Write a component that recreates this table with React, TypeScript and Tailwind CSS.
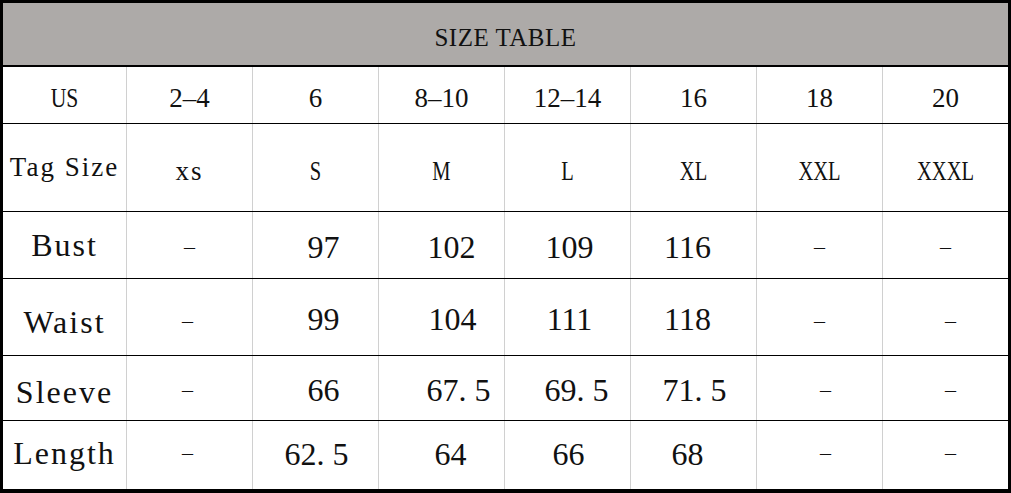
const serif = "font-['Liberation_Serif','Times_New_Roman',serif] text-[#111]";

type Cell = [string, string];

const colLine = "border-l border-[#d0d0d0]";
const dash = "–";
const dashCls = "text-[22px]";

const rows: { cls: string; cells: Cell[] }[] = [
  {
    cls: "h-[57px] border-b border-black text-[27px]",
    cells: [
      ["US", "scale-x-[0.8] pt-[7px]"],
      ["2–4", "pt-[7px]"],
      ["6", "pt-[7px]"],
      ["8–10", "pt-[7px]"],
      ["12–14", "pt-[7px]"],
      ["16", "pt-[7px]"],
      ["18", "pt-[7px]"],
      ["20", "pt-[7px]"],
    ],
  },
  {
    cls: "h-[88px] border-b border-black",
    cells: [
      ["Tag Size", "text-[27px] tracking-[2px]"],
      ["xs", "text-[27px] tracking-[2px] pt-[8px]"],
      ["S", "text-[27px] scale-x-[0.76] pt-[8px]"],
      ["M", "text-[27px] scale-x-[0.76] pt-[8px]"],
      ["L", "text-[27px] scale-x-[0.76] pt-[8px]"],
      ["XL", "text-[27px] scale-x-[0.76] pt-[8px]"],
      ["XXL", "text-[27px] scale-x-[0.76] pt-[8px]"],
      ["XXXL", "text-[27px] scale-x-[0.76] pt-[8px]"],
    ],
  },
  {
    cls: "h-[67px] border-b border-black text-[32px]",
    cells: [
      ["Bust", "tracking-[2px]"],
      [dash, `${dashCls} pt-[4px]`],
      ["97", "pl-[16px] pt-[3px]"],
      ["102", "pl-[20px] pt-[3px]"],
      ["109", "pl-[4px] pt-[3px]"],
      ["116", "pr-[12px] pt-[3px]"],
      [dash, `${dashCls} pt-[4px]`],
      [dash, `${dashCls} pt-[4px]`],
    ],
  },
  {
    cls: "h-[77px] border-b border-black text-[32px]",
    cells: [
      ["Waist", "tracking-[2px] pt-[9px]"],
      [dash, `${dashCls} pr-[4px] pt-[8px]`],
      ["99", "pl-[16px] pt-[3px]"],
      ["104", "pl-[22px] pt-[3px]"],
      ["111", "pl-[4px] pt-[3px]"],
      ["118", "pr-[12px] pt-[3px]"],
      [dash, `${dashCls} pt-[8px]`],
      [dash, `${dashCls} pl-[10px] pt-[8px]`],
    ],
  },
  {
    cls: "h-[65px] border-b border-black text-[32px]",
    cells: [
      ["Sleeve", "tracking-[2px] pt-[7px]"],
      [dash, `${dashCls} pr-[4px] pt-[3px]`],
      ["66", "pl-[16px] pt-[3px]"],
      ["67. 5", "pl-[34px] pt-[3px]"],
      ["69. 5", "pl-[18px] pt-[3px]"],
      ["71. 5", "pl-[2px] pt-[3px]"],
      [dash, `${dashCls} pl-[12px] pt-[3px]`],
      [dash, `${dashCls} pl-[10px] pt-[3px]`],
    ],
  },
  {
    cls: "h-[68px] text-[32px]",
    cells: [
      ["Length", "tracking-[2px] pb-[5px]"],
      [dash, `${dashCls} pr-[4px] pb-[4px]`],
      ["62. 5", "pl-[2px] pb-[3px]"],
      ["64", "pl-[18px] pb-[3px]"],
      ["66", "pl-[2px] pb-[3px]"],
      ["68", "pr-[12px] pb-[3px]"],
      [dash, `${dashCls} pl-[12px] pb-[4px]`],
      [dash, `${dashCls} pl-[10px] pb-[4px]`],
    ],
  },
];

export default function App() {
  return (
    <div className={`w-[1011px] h-[493px] bg-white border-black border-l-[3px] border-t-[3px] border-r-[3px] border-b-[4px] ${serif}`}>
      <div className="h-[64px] bg-[#adaaa8] border-b-2 border-black flex items-center justify-center pt-[6px] text-[25px] leading-none tracking-[0.5px]">
        SIZE TABLE
      </div>
      {rows.map((row, i) => (
        <div key={i} className={`grid grid-cols-[123px_repeat(7,126px)] leading-none ${row.cls}`}>
          {row.cells.map(([text, cls], j) => (
            <div
              key={j}
              className={`flex items-center justify-center whitespace-pre ${j > 0 ? colLine : ""}`}
            >
              <span className={`flex items-center justify-center h-full w-full ${cls}`}>
                <span className="inline-block">{text}</span>
              </span>
            </div>
          ))}
        </div>
      ))}
    </div>
  );
}
